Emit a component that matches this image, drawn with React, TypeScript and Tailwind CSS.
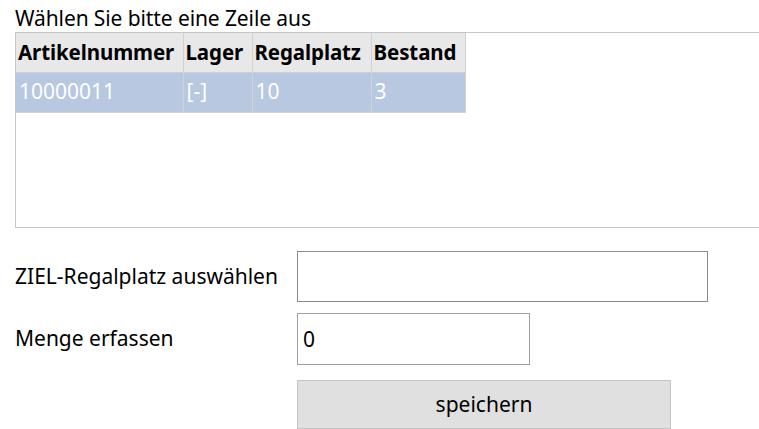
import { useState } from 'react';

const columns = [
  { key: 'artikel', label: 'Artikelnummer', width: 'w-[167px]' },
  { key: 'lager', label: 'Lager', width: 'w-[69px]' },
  { key: 'regal', label: 'Regalplatz', width: 'w-[119px]' },
  { key: 'bestand', label: 'Bestand', width: 'w-[94px]' },
];

const rows = [{ artikel: '10000011', lager: '[-]', regal: '10', bestand: '3' }];

export default function App() {
  const [ziel, setZiel] = useState('');
  const [menge, setMenge] = useState('0');

  return (
    <div className="w-[759px] h-[429px] overflow-hidden bg-white pl-[15px] text-black font-['Noto_Sans',sans-serif]">
      <div className="h-[32px] flex items-end text-[21px] leading-[28px] tracking-[-0.1px]">Wählen Sie bitte eine Zeile aus</div>

      <div className="h-[196px] w-[760px] border border-r-0 border-[#c6c6c6]">
        <table className="border-collapse table-fixed">
          <thead>
            <tr className="h-[39px] bg-[#e8e8e8]">
              {columns.map((c) => (
                <th
                  key={c.key}
                  className={`${c.width} border-r border-b border-[#d2d2d2] px-[2px] text-left font-bold text-[20.5px] tracking-[-0.1px] whitespace-nowrap`}
                >
                  {c.label}
                </th>
              ))}
            </tr>
          </thead>
          <tbody>
            {rows.map((r, i) => (
              <tr key={i} className="h-[40px] bg-[#b8c8e0] text-white">
                {columns.map((c) => (
                  <td key={c.key} className="border-r border-b border-[#d2d2d2] px-[3px] text-[21px]">
                    {r[c.key as keyof typeof r]}
                  </td>
                ))}
              </tr>
            ))}
          </tbody>
        </table>
      </div>

      <div className="mt-[23px] flex flex-col gap-[11px] text-[21px]">
        <div className="flex items-center">
          <label className="w-[282px]">ZIEL-Regalplatz auswählen</label>
          <input
            value={ziel}
            onChange={(e) => setZiel(e.target.value)}
            className="w-[411px] h-[51px] border border-[#8c8c8c] px-[6px] outline-none"
          />
        </div>
        <div className="flex items-center">
          <label className="w-[282px]">Menge erfassen</label>
          <input
            value={menge}
            onChange={(e) => setMenge(e.target.value)}
            className="w-[233px] h-[52px] border border-[#a0a0a0] px-[5px] outline-none"
          />
        </div>
        <div className="flex pl-[282px] pt-[4px]">
          <button className="w-[374px] h-[49px] bg-[#e0e0e0] border border-[#c4c4c4]">speichern</button>
        </div>
      </div>
    </div>
  );
}
